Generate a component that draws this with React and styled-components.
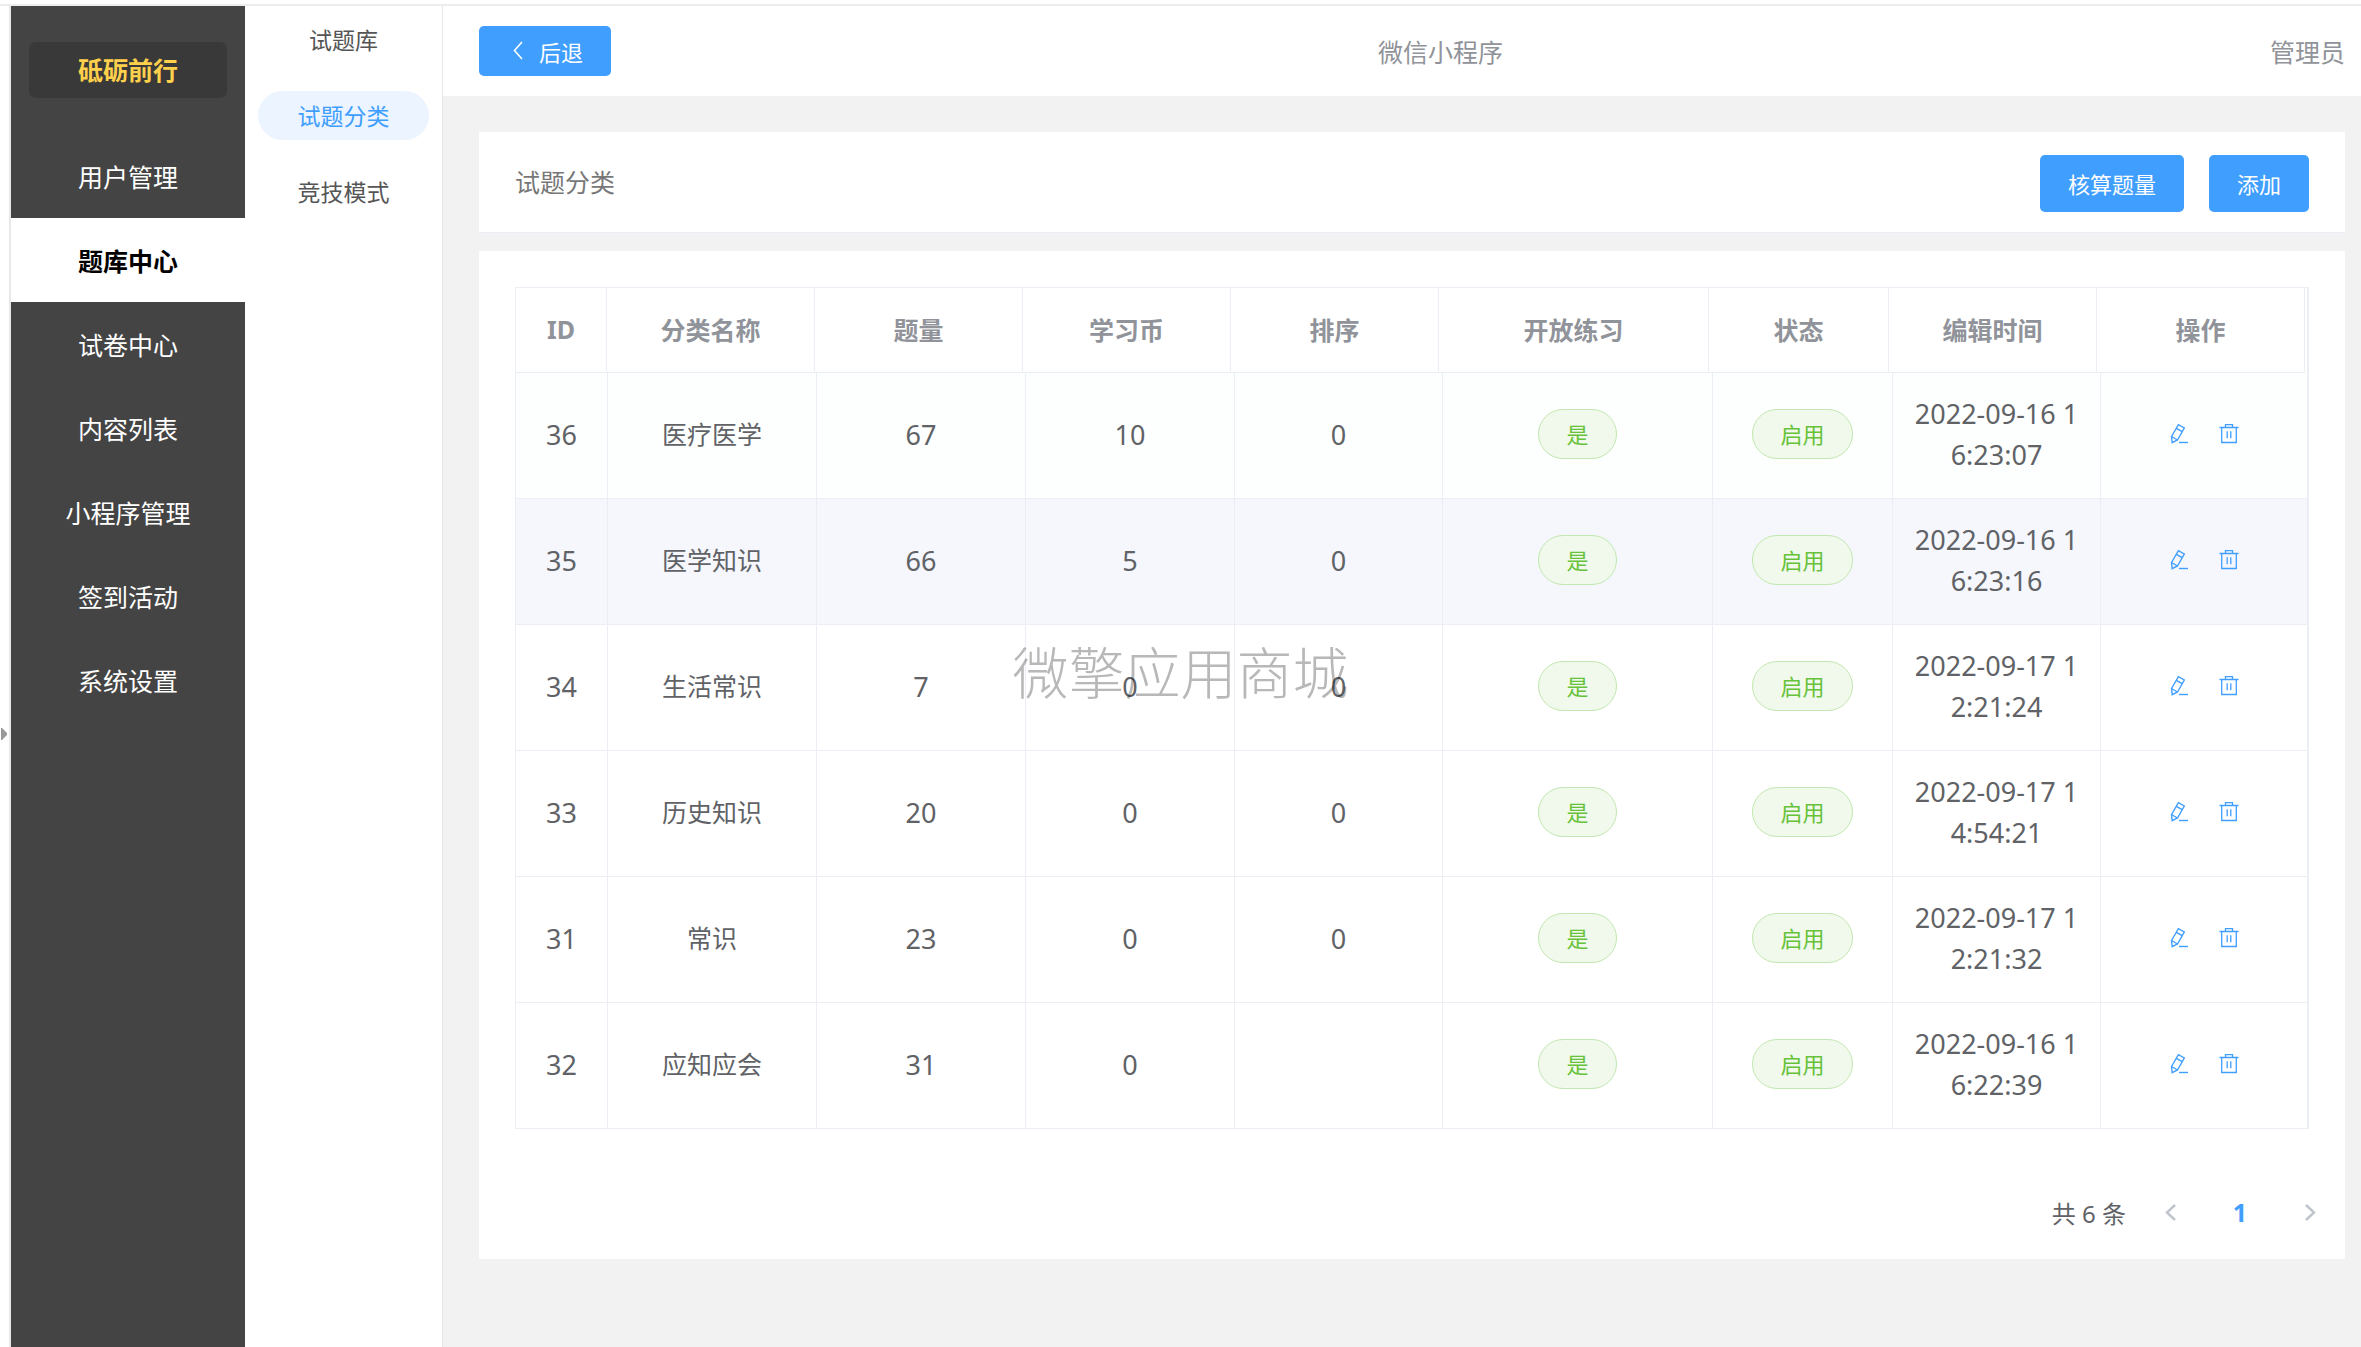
import styled, { createGlobalStyle } from 'styled-components';

const GlobalStyle = createGlobalStyle`
    * {
        box-sizing: border-box;
    }

    body {
        margin: 0;
        color: #606266;
        font-family: 'Noto Sans', 'Noto Sans CJK SC', sans-serif;
        font-size: 25px;
    }

    a {
        text-decoration: none;
    }

    button {
        font-family: inherit;
        cursor: pointer;
    }
`;

const Page = styled.div`
    display: flex;
    flex-direction: column;
    min-height: 100vh;
    background: #ffffff;
`;

const TopLine = styled.div`
    height: 6px;
    border-bottom: 2px solid #ededed;
`;

const Layout = styled.div`
    flex: 1;
    display: flex;
`;

const Gutter = styled.div`
    width: 11px;
    display: flex;
    align-items: center;
    padding: 114px 0 0 1px;
    border-right: 2px solid #e8e8e8;
`;

const Handle = styled.button`
    display: flex;
    padding: 0;
    border: none;
    background: none;
`;

const Sidebar = styled.aside`
    width: 234px;
    background: #444444;
`;

const Brand = styled.div`
    margin: 36px 18px;
    height: 56px;
    line-height: 57px;
    border-radius: 7px;
    background: #393939;
    color: #ffd04b;
    font-weight: 700;
    text-align: center;
`;

const MenuLink = styled.a`
    display: block;
    height: 84px;
    line-height: 86px;
    text-align: center;
    color: ${({ $active }) => ($active ? '#000000' : '#ffffff')};
    background: ${({ $active }) => ($active ? '#ffffff' : 'transparent')};
    font-weight: ${({ $active }) => ($active ? 700 : 400)};
`;

const SubMenu = styled.nav`
    width: 198px;
    padding: 9px 13px;
    display: flex;
    flex-direction: column;
    gap: 27px;
    border-right: 1px solid #e6e6e6;
`;

const SubLink = styled.a`
    height: 49px;
    line-height: 50px;
    border-radius: 25px;
    font-size: 23px;
    text-align: center;
    color: ${({ $active }) => ($active ? '#409eff' : '#555555')};
    background: ${({ $active }) => ($active ? '#ecf4ff' : 'transparent')};
`;

const Main = styled.div`
    flex: 1;
    min-width: 0;
    background: #f2f2f2;
`;

const Header = styled.header`
    display: flex;
    justify-content: space-between;
    align-items: center;
    height: 90px;
    padding: 0 16px 0 36px;
    background: #ffffff;
    color: #909399;
`;

const Button = styled.button`
    height: 57px;
    padding: 0 28px;
    border: none;
    border-radius: 5px;
    background: #409eff;
    color: #ffffff;
    font-size: 22px;
`;

const BackButton = styled(Button)`
    display: flex;
    align-items: center;
    gap: 10px;
    height: 50px;
`;

const Content = styled.main`
    display: flex;
    flex-direction: column;
    gap: 18px;
    padding: 36px 16px 36px 36px;
`;

const TitleBar = styled.div`
    display: flex;
    align-items: center;
    gap: 25px;
    height: 101px;
    padding: 2px 36px 0;
    border-bottom: 1px solid #ebeef5;
    background: #ffffff;
`;

const Title = styled.h1`
    flex: 1;
    margin: 0 0 4px;
    color: #777777;
    font-size: 25px;
    font-weight: 400;
`;

const Card = styled.section`
    background: #ffffff;
    padding-top: 36px;
`;

const TableBox = styled.div`
    margin: 0 36px;
    border: 1px solid #ebeef5;
    border-width: 1px 2px 0 1px;
`;

const Table = styled.table`
    width: 100%;
    table-layout: fixed;
    border-collapse: separate;
    border-spacing: 0;
    text-align: center;
`;

const HeadCell = styled.th`
    height: 85px;
    padding: 0 0 3px;
    border: 1px solid #ebeef5;
    border-width: 0 1px 1px 0;
    color: #909399;
    font-weight: 700;
`;

const rowColors = {
    tint: '#fdfffe',
    hover: '#f5f7fc',
};

const Row = styled.tr`
    background: ${({ $tone }) => rowColors[$tone] || '#ffffff'};
`;

const Cell = styled.td`
    height: 126px;
    padding: 0 20px 3px;
    border: 1px solid #ebeef5;
    border-width: 0 1px 1px 0;
    font-size: ${({ $numeric }) => ($numeric ? '27px' : '25px')};
    line-height: 41px;
    word-break: break-all;

    &:last-child {
        border-right: none;
    }
`;

const Tag = styled.span`
    display: inline-block;
    height: 50px;
    padding: 0 27px;
    border: 1px solid #c2e7b0;
    border-radius: 25px;
    background: #f0f9eb;
    color: #67c23a;
    font-size: 22px;
    line-height: 48px;
    vertical-align: middle;
`;

const Actions = styled.div`
    display: flex;
    justify-content: center;
    gap: 28px;
`;

const IconButton = styled.button`
    display: flex;
    padding: 0;
    border: none;
    background: none;
    color: #409eff;
`;

const Pagination = styled.nav`
    display: flex;
    justify-content: flex-end;
    align-items: center;
    padding: 58px 0 22px;
    font-size: 24px;
`;

const Total = styled.span`
    margin-right: 9px;
`;

const PageButton = styled.button`
    display: flex;
    justify-content: center;
    align-items: center;
    width: 70px;
    height: 50px;
    padding: 0;
    border: none;
    background: none;
    color: ${({ $active }) => ($active ? '#409eff' : '#c0c4cc')};
    font-size: 25px;
    font-weight: 700;
`;

const Watermark = styled.div`
    position: fixed;
    inset: 0;
    display: flex;
    justify-content: center;
    align-items: center;
    padding-bottom: 9px;
    color: #b8b8b8;
    font-family: 'Noto Sans CJK SC', sans-serif;
    font-size: 56px;
    font-weight: 300;
    mix-blend-mode: multiply;
    pointer-events: none;
`;

const EditIcon = () => (
    <svg width="22" height="22" viewBox="0 0 22 22" fill="none" stroke="currentColor" strokeWidth="1.4">
        <path d="M3.5 13.5 10.4 1.7 16.3 5 9.5 17 4.2 19.6Z" />
        <path d="M8.3 5.3 14.2 8.7M3.5 13.5 9.5 17" />
        <path d="M11 19.5H20" />
    </svg>
);

const TrashIcon = () => (
    <svg width="22" height="22" viewBox="0 0 22 22" fill="none" stroke="currentColor" strokeWidth="1.3">
        <path d="M1.5 4.5H20.5M7.5 4.5V1.6H14.5V4.5" />
        <path d="M3.7 4.5V19.5H18.3V4.5M9.2 8.3V15.2M12.8 8.3V15.2" />
    </svg>
);

const BackIcon = () => (
    <svg width="22" height="22" viewBox="0 0 22 22" fill="none" stroke="currentColor" strokeWidth="1.6">
        <path d="M15 2 7.5 10.5 15 19" />
    </svg>
);

const Chevron = ({ right }) => (
    <svg width="11" height="17" viewBox="0 0 11 17" fill="none" stroke="currentColor" strokeWidth="2.4">
        <path d={right ? 'M1 1 9 8.5 1 16' : 'M10 1 2 8.5 10 16'} />
    </svg>
);

const menu = ['用户管理', '题库中心', '试卷中心', '内容列表', '小程序管理', '签到活动', '系统设置'];
const subMenu = ['试题库', '试题分类', '竞技模式'];

const columns = ['ID', '分类名称', '题量', '学习币', '排序', '开放练习', '状态', '编辑时间', '操作'];

// the head keeps a narrow gutter column on the right, so it has its own widths
const headWidths = [91, 208, 208, 208, 208, 270, 180, 208, 208, 2];
const bodyWidths = [92, 209, 209, 209, 208, 270, 180, 208, 206];

const rows = [
    { id: 36, name: '医疗医学', count: 67, coins: 10, sort: 0, time: '2022-09-16 16:23:07', tone: 'tint' },
    { id: 35, name: '医学知识', count: 66, coins: 5, sort: 0, time: '2022-09-16 16:23:16', tone: 'hover' },
    { id: 34, name: '生活常识', count: 7, coins: 0, sort: 0, time: '2022-09-17 12:21:24' },
    { id: 33, name: '历史知识', count: 20, coins: 0, sort: 0, time: '2022-09-17 14:54:21' },
    { id: 31, name: '常识', count: 23, coins: 0, sort: 0, time: '2022-09-17 12:21:32' },
    { id: 32, name: '应知应会', count: 31, coins: 0, sort: '', time: '2022-09-16 16:22:39' },
];

const Columns = ({ widths }) => (
    <colgroup>
        {widths.map((width, i) => <col key={i} width={width} />)}
    </colgroup>
);

const App = () => (
    <Page>
        <GlobalStyle />
        <TopLine />
        <Layout>
            <Gutter>
                <Handle aria-label="展开">
                    <svg width="7" height="12" viewBox="0 0 7 12" fill="#999999">
                        <path d="M0 0H1L6 5V7L1 12H0Z" />
                    </svg>
                </Handle>
            </Gutter>
            <Sidebar>
                <Brand>砥砺前行</Brand>
                <nav>
                    {menu.map((label) => (
                        <MenuLink key={label} href="#" $active={label === '题库中心'}>{label}</MenuLink>
                    ))}
                </nav>
            </Sidebar>
            <SubMenu>
                {subMenu.map((label) => (
                    <SubLink key={label} href="#" $active={label === '试题分类'}>{label}</SubLink>
                ))}
            </SubMenu>
            <Main>
                <Header>
                    <BackButton>
                        <BackIcon />
                        后退
                    </BackButton>
                    <span>微信小程序</span>
                    <span>管理员</span>
                </Header>
                <Content>
                    <TitleBar>
                        <Title>试题分类</Title>
                        <Button>核算题量</Button>
                        <Button>添加</Button>
                    </TitleBar>
                    <Card>
                        <TableBox>
                            <Table>
                                <Columns widths={headWidths} />
                                <thead>
                                    <tr>
                                        {columns.map((label) => <HeadCell key={label}>{label}</HeadCell>)}
                                    </tr>
                                </thead>
                            </Table>
                            <Table>
                                <Columns widths={bodyWidths} />
                                <tbody>
                                    {rows.map((row) => (
                                        <Row key={row.id} $tone={row.tone}>
                                            <Cell $numeric>{row.id}</Cell>
                                            <Cell>{row.name}</Cell>
                                            <Cell $numeric>{row.count}</Cell>
                                            <Cell $numeric>{row.coins}</Cell>
                                            <Cell $numeric>{row.sort}</Cell>
                                            <Cell><Tag>是</Tag></Cell>
                                            <Cell><Tag>启用</Tag></Cell>
                                            <Cell $numeric>{row.time}</Cell>
                                            <Cell>
                                                <Actions>
                                                    <IconButton aria-label="编辑"><EditIcon /></IconButton>
                                                    <IconButton aria-label="删除"><TrashIcon /></IconButton>
                                                </Actions>
                                            </Cell>
                                        </Row>
                                    ))}
                                </tbody>
                            </Table>
                        </TableBox>
                        <Pagination>
                            <Total>共 6 条</Total>
                            <PageButton aria-label="上一页"><Chevron /></PageButton>
                            <PageButton $active>1</PageButton>
                            <PageButton aria-label="下一页"><Chevron right /></PageButton>
                        </Pagination>
                    </Card>
                </Content>
            </Main>
        </Layout>
        <Watermark>微擎应用商城</Watermark>
    </Page>
);

export default App;
